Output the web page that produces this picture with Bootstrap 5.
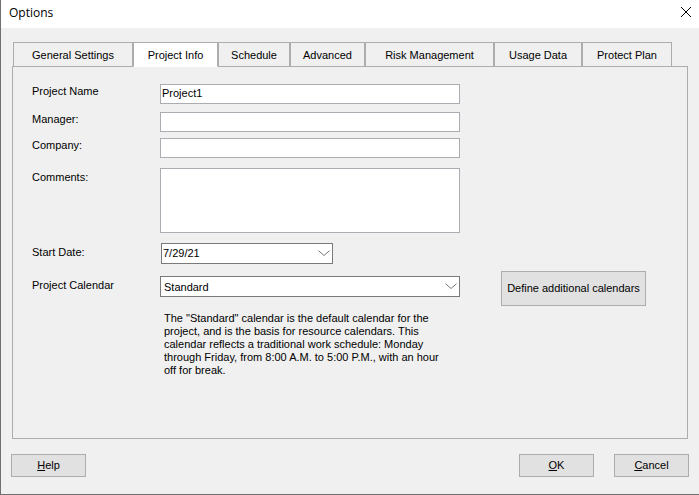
<!DOCTYPE html>
<html lang="en">
<head>
<meta charset="utf-8">
<meta name="viewport" content="width=device-width, initial-scale=1">
<title>Options</title>
<link href="https://cdn.jsdelivr.net/npm/bootstrap@5.3.0/dist/css/bootstrap.min.css" rel="stylesheet">
<style>
body { font-family: "Liberation Sans", Arial, sans-serif; font-size: 11px; line-height: 16px; color: #000; background: #f0f0f0; }
.dialog { border-left: 1px solid #707070; border-bottom: 1px solid #707070; }
.titlebar { height: 28px; padding: 0 7px 0 8px; font-family: "Open Sans", "Noto Sans", sans-serif; }
.titlebar h1 { font-size: 12px; line-height: 26px; font-weight: 400; }
.close-btn { width: 12px; height: 24px; }
.main-area { padding: 14px 11px 0; }
.option-tabs { padding-left: 1px; margin-bottom: -1px; }
.option-tabs .nav-link { height: 25px; padding: 0; color: #000; background: #f0f0f0; border: 1px solid #adadad; border-radius: 0; line-height: 24px; font-size: 11px; }
.option-tabs .nav-link.active { background: #fff; border-bottom-color: #fff; color: #000; }
.w-general { width: 120px; } .w-info { width: 85px; } .w-schedule { width: 72px; } .w-advanced { width: 75px; }
.w-risk { width: 129px; } .w-usage { width: 88px; } .w-protect { width: 90px; }
.panel { border: 1px solid #adadad; padding: 17px 19px 0; }
.field-label { width: 128px; flex: none; line-height: 14px; }
.low-label { padding-top: 2px; }
.field-box { width: 300px; }
.date-box { width: 172px; margin-left: 1px; }
.form-control, .form-select { font-size: 11px; line-height: 16px; color: #000; border: 1px solid #abadb3; border-radius: 0; padding: 0 1px 2px; min-height: 0; height: 20px; }
.form-select, .date-box .form-control { height: 21px; border-color: #7a7a7a; }
.form-select { padding: 1px 3px 0; line-height: 18px; background-image: none; }
textarea.form-control { height: 65px; min-height: 0; resize: none; }
.chevron { position: absolute; right: 3px; top: 7px; width: 12px; height: 7px; pointer-events: none; }
.date-box .chevron-btn { position: absolute; right: 1px; top: 1px; width: 18px; height: 19px; }
.date-box .chevron { top: 6px; right: 2px; }
.btn-classic { --bs-btn-bg: #e1e1e1; --bs-btn-color: #000; --bs-btn-border-color: #adadad; --bs-btn-hover-bg: #e5f1fb; --bs-btn-hover-border-color: #0078d7; --bs-btn-border-radius: 0; --bs-btn-font-size: 11px; --bs-btn-line-height: 21px; --bs-btn-padding-x: 0; --bs-btn-padding-y: 0; min-width: 75px; white-space: nowrap; }
.btn-calendars { width: 145px; --bs-btn-line-height: 33px; margin: -5px 0 -9px 41px; }
.gap-name { margin-bottom: 8px; } .gap-manager { margin-bottom: 6px; } .gap-block { margin-bottom: 10px; } .gap-date { margin-bottom: 12px; }
.hint { width: 288px; margin: 15px 0 61px 132px; line-height: 13px; }
.footer-bar { padding: 15px 10px 17px; }
.footer-right { gap: 20px; }
</style>
<script src="https://cdn.jsdelivr.net/npm/bootstrap@5.3.0/dist/js/bootstrap.bundle.min.js"></script>
</head>
<body>
<div class="dialog">
  <header class="titlebar bg-white d-flex justify-content-between align-items-start">
    <h1 class="m-0">Options</h1>
    <button type="button" class="close-btn btn border-0 p-0 d-flex align-items-center justify-content-center" aria-label="Close">
      <svg width="12" height="12" viewBox="0 0 12 12" fill="none" stroke="#000"><path d="M1 1 11 11M11 1 1 11"/></svg>
    </button>
  </header>
  <main class="main-area">
    <div class="option-tabs nav position-relative" role="tablist">
      <button type="button" role="tab" class="nav-link w-general">General Settings</button>
      <button type="button" role="tab" class="nav-link w-info active" aria-selected="true">Project Info</button>
      <button type="button" role="tab" class="nav-link w-schedule">Schedule</button>
      <button type="button" role="tab" class="nav-link w-advanced">Advanced</button>
      <button type="button" role="tab" class="nav-link w-risk">Risk Management</button>
      <button type="button" role="tab" class="nav-link w-usage">Usage Data</button>
      <button type="button" role="tab" class="nav-link w-protect">Protect Plan</button>
    </div>
    <form class="panel">
      <div class="d-flex gap-name">
        <label class="field-label" for="name">Project Name</label>
        <div class="field-box"><input id="name" type="text" class="form-control" value="Project1"></div>
      </div>
      <div class="d-flex gap-manager">
        <label class="field-label" for="manager">Manager:</label>
        <div class="field-box"><input id="manager" type="text" class="form-control"></div>
      </div>
      <div class="d-flex gap-block">
        <label class="field-label" for="company">Company:</label>
        <div class="field-box"><input id="company" type="text" class="form-control"></div>
      </div>
      <div class="d-flex gap-block">
        <label class="field-label low-label" for="comments">Comments:</label>
        <div class="field-box"><textarea id="comments" class="form-control"></textarea></div>
      </div>
      <div class="d-flex gap-date">
        <label class="field-label low-label" for="start">Start Date:</label>
        <div class="date-box position-relative">
          <input id="start" type="text" class="form-control" value="7/29/21">
          <button type="button" class="chevron-btn btn border-0 p-0" aria-label="Open calendar"><svg class="chevron" viewBox="0 0 12 7" fill="none" stroke="#7a7a7a"><path d="M.5.7 6 5.5 11.500.7"/></svg></button>
        </div>
      </div>
      <div class="d-flex">
        <label class="field-label low-label" for="calendar">Project Calendar</label>
        <div class="field-box position-relative">
          <select id="calendar" class="form-select"><option>Standard</option></select>
          <svg class="chevron" viewBox="0 0 12 7" fill="none" stroke="#7a7a7a"><path d="M.5.7 6 5.5 11.500.7"/></svg>
        </div>
        <button type="button" class="btn btn-classic btn-calendars">Define additional calendars</button>
      </div>
      <p class="hint">The "Standard" calendar is the default calendar for the project, and is the basis for resource calendars. This calendar reflects a traditional work schedule: Monday through Friday, from 8:00 A.M. to 5:00 P.M., with an hour off for break.</p>
    </form>
  </main>
  <footer class="footer-bar d-flex justify-content-between">
    <button type="button" class="btn btn-classic"><u>H</u>elp</button>
    <div class="footer-right d-flex">
      <button type="button" class="btn btn-classic"><u>O</u>K</button>
      <button type="button" class="btn btn-classic"><u>C</u>ancel</button>
    </div>
  </footer>
</div>
</body>
</html>
